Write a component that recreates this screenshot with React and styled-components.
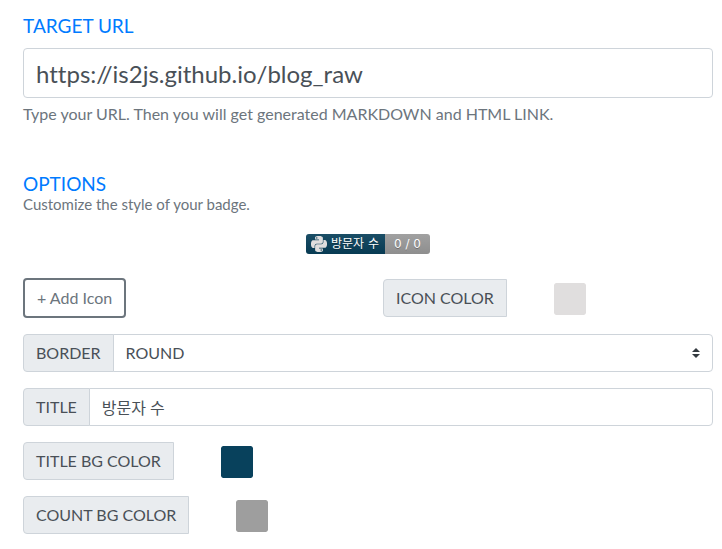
import React, { useState } from "react";
import styled, { createGlobalStyle } from "styled-components";
import { SiPython } from "react-icons/si";

const GlobalStyle = createGlobalStyle`
  *, *::before, *::after { box-sizing: border-box; }
  body {
    margin: 0;
    background: #fff;
    color: #495057;
    font: 400 16px/24px Lato, "Noto Sans CJK KR", sans-serif;
    font-variant-ligatures: none;
  }
  input, select, button { font: inherit; font-variant-ligatures: none; color: inherit; margin: 0; }
`;

const Page = styled.main`
  padding: 14px 9px 15px 23px;
`;

const Section = styled.section`
  margin-bottom: ${(p) => (p.$spaced ? "46px" : "0")};
`;

const Heading = styled.h2`
  display: block;
  margin: 0;
  color: #007bff;
  font-size: 19px;
  font-weight: 400;
  line-height: 24px;
`;

const UrlInput = styled.input`
  display: block;
  width: 100%;
  height: 50px;
  margin-top: 10px;
  padding: 8px 12px;
  border: 1px solid #ced4da;
  border-radius: 4px;
  background: #fff;
  && { margin-top: 10px; font-size: 24px; }
`;

const HelpText = styled.p`
  margin: 4px 0 0;
  color: #6c757d;
`;

const Subtitle = styled.p`
  margin: 0;
  color: #6c757d;
  font-size: 15px;
  line-height: 16px;
`;

const Preview = styled.div`
  display: flex;
  justify-content: center;
  margin: 22px 0 24px;
`;

const Badge = styled.div`
  display: flex;
  height: 20px;
  overflow: hidden;
  border-radius: 3px;
  color: #fff;
  font: 400 12px/20px "DejaVu Sans", "Noto Sans CJK KR", sans-serif;
  text-shadow: 0 1px 0 rgba(1, 1, 1, 0.3);
`;

const BadgePart = styled.span`
  display: flex;
  align-items: center;
  gap: 4px;
  padding: ${(p) => p.$padding};
  white-space: nowrap;
  background: linear-gradient(rgba(187, 187, 187, 0.1), rgba(0, 0, 0, 0.1)), ${(p) => p.$color};
`;

const Form = styled.div`
  display: grid;
  gap: 16px;
`;

const Columns = styled.div`
  display: grid;
  grid-template-columns: 1fr 1fr;
  column-gap: 30px;
  align-items: center;
`;

const AddButton = styled.button`
  justify-self: start;
  padding: 6px 12px;
  border: 2px solid #6c757d;
  border-radius: 4px;
  background: transparent;
  && { color: #6c757d; }
`;

const Group = styled.div`
  display: flex;
  align-items: flex-start;
`;

const Addon = styled.label`
  flex: none;
  padding: 6px 12px;
  border: 1px solid #ced4da;
  border-radius: 4px 0 0 4px;
  background: #e9ecef;
`;

const TextInput = styled.input`
  flex: 1;
  min-width: 0;
  height: 38px;
  padding: 6px 12px;
  border: 1px solid #ced4da;
  border-radius: 0 4px 4px 0;
  background: #fff;
  && { margin-left: -1px; }
`;

const SelectWrap = styled.div`
  flex: 1;
  display: grid;
  align-items: center;
`;

const Select = styled.select`
  grid-area: 1 / 1;
  appearance: none;
  height: 38px;
  padding: 6px 28px 6px 12px;
  border: 1px solid #ced4da;
  border-radius: 0 4px 4px 0;
  background: #fff;
  && { margin-left: -1px; }
`;

const Arrows = styled.svg`
  grid-area: 1 / 1;
  justify-self: end;
  width: 8px;
  height: 10px;
  margin-right: 13px;
  pointer-events: none;
`;

const Swatch = styled.input`
  appearance: none;
  width: 32px;
  height: 32px;
  padding: 0;
  border: 0;
  border-radius: 2px;
  background: none;
  cursor: pointer;
  && { margin: 4px 0 0 47px; }
  &::-webkit-color-swatch-wrapper { padding: 0; }
  &::-webkit-color-swatch { border: 0; border-radius: 2px; }
`;

function ColorField({ id, label, value, onChange }) {
  return (
    <Group>
      <Addon htmlFor={id}>{label}</Addon>
      <Swatch id={id} type="color" value={value} onChange={(e) => onChange(e.target.value)} />
    </Group>
  );
}

export default function App() {
  const [url, setUrl] = useState("https://is2js.github.io/blog_raw");
  const [title, setTitle] = useState("방문자 수");
  const [iconColor, setIconColor] = useState("#e0dede");
  const [titleBg, setTitleBg] = useState("#08415c");
  const [countBg, setCountBg] = useState("#9e9e9e");

  return (
    <>
      <GlobalStyle />
      <Page>
        <Section $spaced>
          <Heading as="label" htmlFor="url">TARGET URL</Heading>
          <UrlInput id="url" type="text" value={url} onChange={(e) => setUrl(e.target.value)} />
          <HelpText>Type your URL. Then you will get generated MARKDOWN and HTML LINK.</HelpText>
        </Section>
        <Section>
          <Heading>OPTIONS</Heading>
          <Subtitle>Customize the style of your badge.</Subtitle>
          <Preview>
            <Badge>
              <BadgePart $color={titleBg} $padding="0 6px 0 5px">
                <SiPython size={16} color={iconColor} aria-hidden="true" />
                {title}
              </BadgePart>
              <BadgePart $color={countBg} $padding="0 9px">0 / 0</BadgePart>
            </Badge>
          </Preview>
          <Form>
            <Columns>
              <AddButton type="button">+ Add Icon</AddButton>
              <ColorField id="icon-color" label="ICON COLOR" value={iconColor} onChange={setIconColor} />
            </Columns>
            <Group>
              <Addon htmlFor="border">BORDER</Addon>
              <SelectWrap>
                <Select id="border" defaultValue="round">
                  <option value="round">ROUND</option>
                  <option value="flat">FLAT</option>
                </Select>
                <Arrows viewBox="0 0 4 5" aria-hidden="true">
                  <path fill="#343a40" d="M2 0L0 2h4zm0 5L0 3h4z" />
                </Arrows>
              </SelectWrap>
            </Group>
            <Group>
              <Addon htmlFor="title">TITLE</Addon>
              <TextInput id="title" type="text" value={title} onChange={(e) => setTitle(e.target.value)} />
            </Group>
            <ColorField id="title-bg" label="TITLE BG COLOR" value={titleBg} onChange={setTitleBg} />
            <ColorField id="count-bg" label="COUNT BG COLOR" value={countBg} onChange={setCountBg} />
          </Form>
        </Section>
      </Page>
    </>
  );
}
